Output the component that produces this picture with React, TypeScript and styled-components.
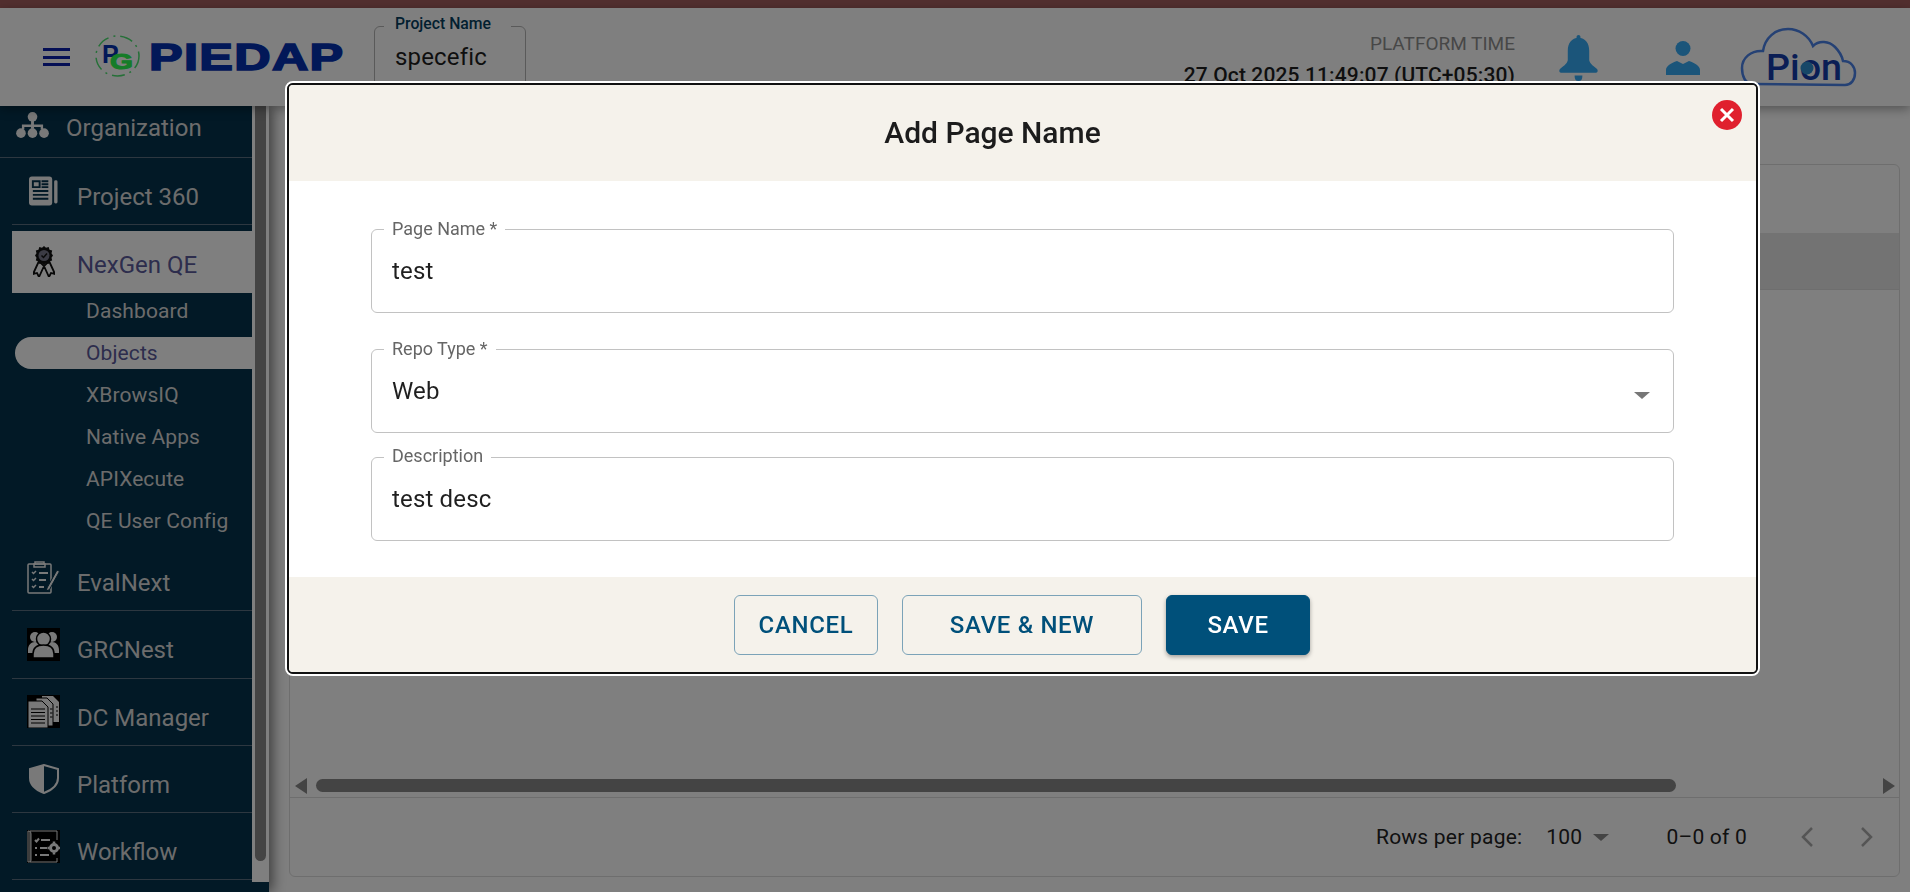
import React from "react";
import styled, { createGlobalStyle } from "styled-components";

const GlobalStyle = createGlobalStyle`
  html, body { margin: 0; padding: 0; height: 100%; background: #fff; overflow: hidden; }
  body { font-family: Roboto, "Liberation Sans", sans-serif; color: #1f1f1f; }
  * { box-sizing: border-box; }
`;

const Page = styled.div`
  width: 1910px;
  height: 892px;
  display: flex;
  flex-direction: column;
  overflow: hidden;
`;
const TopStrip = styled.div`
  height: 8px;
  background: #a45e5e;
  flex: none;
`;
const Header = styled.header`
  height: 98px;
  flex: none;
  display: flex;
  align-items: center;
  padding-left: 43px;
  background: #fff;
  box-shadow: 0 3px 10px rgba(0, 0, 0, 0.35);
  position: relative;
  z-index: 2;
`;
const Burger = styled.div`
  width: 27px;
  height: 18px;
  display: flex;
  flex-direction: column;
  justify-content: space-between;
  span {
    height: 3px;
    background: #0a1eaa;
  }
`;
const Logo = styled.div`
  display: flex;
  align-items: center;
  margin-left: 25px;
  width: 279px;
`;
const LogoWord = styled.span`
  font-family: "Liberation Sans", sans-serif;
  font-weight: 700;
  font-size: 37px;
  line-height: 1;
  letter-spacing: 1px;
  color: #0530b0;
  display: inline-block;
  -webkit-text-stroke: 1.6px #0530b0;
  transform: scaleX(1.36);
  transform-origin: left center;
  margin-left: 8px;
`;
const ProjectField = styled.fieldset`
  width: 152px;
  height: 80px;
  align-self: flex-start;
  margin: 7px 0 0;
  padding: 0 0 0 9px;
  border: 1px solid #b5b5b5;
  border-radius: 6px;
  legend {
    padding: 0 20px 6px 11px;
    font-size: 15.75px;
    line-height: 17px;
    font-weight: 500;
    color: #05405f;
  }
`;
const ProjectValue = styled.div`
  font-size: 24px;
  line-height: 28px;
  margin: 5px 0 0 11px;
  letter-spacing: 0.16px;
`;
const HeaderRight = styled.div`
  margin-left: auto;
  display: flex;
  align-items: flex-start;
  height: 100%;
  padding-right: 54px;
`;
const TimeBlock = styled.div`
  text-align: right;
  padding-top: 26px;
  width: 345px;
  flex: none;
`;
const TimeLabel = styled.div`
  font-size: 19px;
  line-height: 20px;
  color: #8f8f8f;
`;
const TimeValue = styled.div`
  font-size: 21px;
  line-height: 24px;
  margin-top: 9px;
  font-weight: 500;
  letter-spacing: 0.13px;
  white-space: nowrap;
  margin-left: -10px;
`;
const HeaderIcon = styled.div<{ $ml: number; $mt: number }>`
  margin-left: ${(p) => p.$ml}px;
  margin-top: ${(p) => p.$mt}px;
  line-height: 0;
`;

const Body = styled.div`
  flex: 1;
  display: flex;
  min-height: 0;
`;
const Sidebar = styled.aside`
  width: 269px;
  flex: none;
  display: flex;
  align-items: flex-start;
  background: #04324c;
  box-shadow: 4px 0 12px rgba(0, 0, 0, 0.5);
  position: relative;
  z-index: 1;
`;
const NavList = styled.nav`
  width: 252px;
  flex: none;
  margin-top: -13px;
  display: flex;
  flex-direction: column;
`;
const NavRow = styled.div<{ $inset?: boolean; $active?: boolean; $h?: number }>`
  height: ${(p) => p.$h ?? 67.3}px;
  flex: none;
  display: flex;
  align-items: center;
  margin-left: ${(p) => (p.$inset ? 12 : 0)}px;
  margin-top: ${(p) => (p.$active ? 5.7 : 0)}px;
  padding-left: ${(p) => (p.$inset ? 15 : 16)}px;
  font-size: 24px;
  color: ${(p) => (p.$active ? "#5a5a9a" : "#d8d8d8")};
  background: ${(p) => (p.$active ? "#fff" : "transparent")};
  border-bottom: ${(p) => (p.$active ? "none" : "1px solid #5a6f80")};
`;
const NavIconBox = styled.span<{ $dark?: boolean; $w: number }>`
  width: 33px;
  height: 33px;
  flex: none;
  display: flex;
  align-items: center;
  justify-content: center;
  margin-right: ${(p) => p.$w}px;
  background: ${(p) => (p.$dark ? "#000" : "transparent")};
`;
const NavLabel = styled.span<{ $drop: number }>`
  margin-top: ${(p) => p.$drop}px;
`;
const SubList = styled.div`
  margin-top: 2px;
  margin-bottom: 7px;
  display: flex;
  flex-direction: column;
  gap: 10px;
`;
const SubRow = styled.div<{ $active?: boolean }>`
  height: 32px;
  margin-left: 15px;
  padding-left: 71px;
  border-radius: 16px 0 0 16px;
  display: flex;
  align-items: center;
  font-size: 21px;
  letter-spacing: 0.1px;
  color: ${(p) => (p.$active ? "#5a5a9a" : "#d8d8d8")};
  background: ${(p) => (p.$active ? "#fff" : "transparent")};
`;
const Track = styled.div`
  width: 17px;
  height: 776px;
  flex: none;
  background: #fff;
  padding: 0 3px;
`;
const Thumb = styled.div`
  height: 755px;
  background: #888;
  border-radius: 0 0 6px 6px;
`;

const Main = styled.main`
  flex: 1;
  padding: 58px 10px 15px 20px;
  background: #fff;
  min-width: 0;
`;
const Panel = styled.section`
  height: 100%;
  border: 1px solid #ddd;
  border-radius: 6px;
  display: flex;
  flex-direction: column;
`;
const TableHead = styled.div`
  height: 57px;
  margin-top: 68px;
  background: #e7e7e7;
  border-bottom: 1px solid #ddd;
  flex: none;
`;
const TableEmpty = styled.div`
  flex: 1;
`;
const HScroll = styled.div`
  height: 24px;
  flex: none;
  display: flex;
  align-items: center;
  padding: 0 4px 0 5px;
  border-bottom: 1px solid #ddd;
`;
const HThumb = styled.div`
  width: 1360px;
  height: 13px;
  margin-left: 9px;
  background: #888;
  border-radius: 7px;
`;
const Arrow = styled.span<{ $right?: boolean }>`
  width: 0;
  height: 0;
  border-top: 8px solid transparent;
  border-bottom: 8px solid transparent;
  ${(p) => (p.$right ? "border-left: 12px solid #888; margin-left: auto;" : "border-right: 12px solid #888;")}
`;
const TableFooter = styled.div`
  height: 78px;
  flex: none;
  display: flex;
  align-items: center;
  font-size: 21px;
  letter-spacing: 0.22px;
  color: #222;
  padding-left: 1086px;
`;
const RowsValue = styled.span`
  margin-left: 24px;
  display: flex;
  align-items: center;
  gap: 11px;
`;
const Caret = styled.span<{ $c?: string }>`
  display: block;
  width: 0;
  height: 0;
  border-left: 8px solid transparent;
  border-right: 8px solid transparent;
  border-top: 7px solid ${(p) => p.$c ?? "#888"};
`;
const RangeText = styled.span`
  margin-left: 57px;
`;
const PagerIcon = styled.span<{ $ml: number }>`
  margin-left: ${(p) => p.$ml}px;
  line-height: 0;
`;

const Overlay = styled.div`
  position: fixed;
  inset: 0;
  z-index: 10;
  background: rgba(0, 0, 0, 0.5);
  padding: 81px 0 0 285px;
`;
const Modal = styled.div`
  width: 1475px;
  height: 595px;
  border: 2px solid #fff;
  border-radius: 8px;
  position: relative;
`;
const ModalInner = styled.div`
  height: 100%;
  border: 2px solid #111;
  border-radius: 6px;
  overflow: hidden;
  display: flex;
  flex-direction: column;
  background: #fff;
`;
const ModalHead = styled.div`
  height: 96px;
  flex: none;
  background: #f5f2eb;
  display: flex;
  align-items: center;
  justify-content: center;
  padding: 0 60px 2px 0;
  font-size: 30px;
  font-weight: 500;
  color: #1c1c1c;
`;
const CloseButton = styled.button`
  position: absolute;
  top: 17px;
  right: 16px;
  width: 30px;
  height: 30px;
  padding: 0;
  border: 0;
  border-radius: 50%;
  background: #e0202e;
  display: flex;
  align-items: center;
  justify-content: center;
`;
const ModalBody = styled.div`
  flex: 1;
  padding: 48px 82px 0 82px;
  display: flex;
  flex-direction: column;
`;
const Field = styled.fieldset<{ $mb: number }>`
  margin: -9.5px 0 ${(p) => p.$mb}px;
  padding: 0 0 0 12px;
  height: 93.5px;
  flex: none;
  border: 1px solid #c2c2c2;
  border-radius: 6px;
  position: relative;
  legend {
    padding: 0 8px 3px;
    font-size: 18px;
    line-height: 17px;
    height: 20px;
    color: #666;
  }
`;
const FieldValue = styled.div`
  font-size: 24px;
  line-height: 28px;
  margin-top: 17.5px;
  margin-left: 8px;
  letter-spacing: 0.16px;
`;
const SelectCaret = styled.span`
  position: absolute;
  right: 23px;
  top: 32.5px;
`;
const ModalFoot = styled.div`
  height: 95px;
  flex: none;
  background: #f5f2eb;
  display: flex;
  align-items: center;
  justify-content: center;
  gap: 24px;
  padding-right: 1px;
`;
const ActionButton = styled.button<{ $w: number; $primary?: boolean }>`
  width: ${(p) => p.$w}px;
  height: 60px;
  border-radius: 6px;
  font-family: Roboto, sans-serif;
  font-size: 24px;
  font-weight: 500;
  letter-spacing: 0.68px;
  border: 1px solid ${(p) => (p.$primary ? "#00507a" : "#7ba3b8")};
  background: ${(p) => (p.$primary ? "#00507a" : "transparent")};
  color: ${(p) => (p.$primary ? "#fff" : "#00507a")};
  box-shadow: ${(p) => (p.$primary ? "0 2px 4px rgba(0,0,0,.35)" : "none")};
`;

const c = "#f2f2f2";
const accent = "#36aaf5";

const OrgIcon = () => (
  <svg width="33" height="26" viewBox="0 0 34 27" fill={c}>
    <circle cx="17" cy="5" r="5" />
    <rect x="15.5" y="9" width="3" height="8" />
    <path d="M6 13h22v5h-2.500v-2.500h-7v2h-3v-2h-7V18H6z" />
    <circle cx="5" cy="22" r="5" />
    <circle cx="17" cy="22" r="5" />
    <circle cx="29" cy="22" r="5" />
  </svg>
);
const NewsIcon = () => (
  <svg width="29" height="30" viewBox="0 0 30 30">
    <rect x="0" y="0" width="24" height="30" rx="3" fill={c} />
    <rect x="26" y="4" width="3.500" height="24" rx="1.500" fill={c} />
    <path d="M4 5h7v6H4zM13 5h7M13 8h7M13 11h7M4 15h16M4 19h16M4 23h16" stroke="#04324c" strokeWidth="2" fill="none" />
  </svg>
);
const BadgeIcon = () => (
  <svg width="22" height="31" viewBox="0 0 22 31">
    <path d="M6 15 0 28l4-1 2 4 5-11zM16 15l6 13-4-1-2 4-5-11z" fill="none" stroke="#111" strokeWidth="1.800" />
    <path d="M11 0l2 1.800 2.700-.8.800 2.700 2.700.8-.7 2.700L20 9.500l-1.500 2.300.7 2.700-2.700.8-.8 2.700-2.700-.8L11 19l-2-1.800-2.700.8-.8-2.700-2.700-.8.700-2.700L2 9.500l1.500-2.300-.7-2.700 2.700-.8.800-2.700 2.700.8z" fill="#111" />
    <circle cx="11" cy="9.500" r="5.500" fill="#778" />
    <path d="M8.500 9.500l2 2 3.500-4" stroke="#111" strokeWidth="1.500" fill="none" />
  </svg>
);
const ClipboardIcon = () => (
  <svg width="33" height="33" viewBox="0 0 33 33" fill="none" stroke={c} strokeWidth="1.500">
    <rect x="1" y="3" width="23" height="29" rx="1" />
    <path d="M8 3V1h9v2M7 3h11v3H7z" />
    <path d="M5 11l1.500 1.500L9 10M5 18l1.500 1.500L9 17M5 25l1.500 1.500L9 24" />
    <path d="M12 12h9M12 19h7M12 26h5" strokeWidth="2" />
    <path d="M20 27l10-18 2.500 1.500-10 18-3 1.500z" fill={c} stroke="#04324c" strokeWidth="1" />
  </svg>
);
const GroupIcon = () => (
  <svg width="31" height="28" viewBox="0 0 31 28" fill={c}>
    <circle cx="7" cy="7" r="5" />
    <circle cx="24" cy="7" r="5" />
    <path d="M0 20c0-5 3-8 7-8s7 3 7 8v3H0zM17 20c0-5 3-8 7-8s7 3 7 8v3H17z" />
    <circle cx="15.500" cy="9" r="7" stroke="#000" strokeWidth="1.500" />
    <path d="M5 28v-4c0-6 4-9 10.500-9S26 18 26 24v4z" stroke="#000" strokeWidth="1.500" />
  </svg>
);
const DocsIcon = () => (
  <svg width="33" height="33" viewBox="0 0 33 33">
    <path d="M15 1h11l6 6v20H15z" fill={c} />
    <path d="M9 3h11l6 6v22H9z" fill={c} stroke="#000" />
    <path d="M1 6h14l6 6v21H1z" fill={c} stroke="#000" />
    <path d="M4 14h14M4 17.500h14M4 21h14M4 24.500h14M4 28h14" stroke="#000" />
    <path d="M23 14h2.500M23 18h2.500M23 22h2.500M29 12h2M29 16h2M29 20h2" stroke="#000" />
  </svg>
);
const ShieldIcon = () => (
  <svg width="30" height="30" viewBox="0 0 30 30">
    <path d="M15 1 1 5v9c0 7 6 12 14 15 8-3 14-8 14-15V5z" fill="none" stroke={c} strokeWidth="2" />
    <path d="M15 1 1 5v9c0 7 6 12 14 15z" fill={c} />
  </svg>
);
const FlowIcon = () => (
  <svg width="33" height="33" viewBox="0 0 33 33" fill="none" stroke={c} strokeWidth="1.500">
    <path d="M3 1v31M3 1h27v9M3 32h27v-4" strokeWidth="1" />
    <path d="M1 1c2 0 3 1 3 3v26c0 2-1 2-3 2z" strokeWidth="1" />
    <path d="M8 10l1.500 1.500L12 8.500M14 10h9M8 18h2M13 18h7M8 25h2M13 25h9" strokeWidth="2" />
    <circle cx="27" cy="18" r="3.500" strokeWidth="3" />
    <path d="M27 11.500v2M27 22.500v2M20.500 18h2M31 18h2" strokeWidth="2.500" />
  </svg>
);
const BellIcon = () => (
  <svg width="39" height="46" viewBox="0 0 40 50" preserveAspectRatio="none" fill={accent}>
    <rect x="18" y="0" width="4" height="6" rx="2" />
    <path d="M20 3c-7 0-11 6-11 14v10c0 3-3 6-8 10-1 1-1 4 1 4h36c2 0 2-3 1-4-5-4-8-7-8-10V17c0-8-4-14-11-14z" />
    <path d="M16 44h8c0 4-1 6-4 6s-4-2-4-6z" />
  </svg>
);
const UserIcon = () => (
  <svg width="34" height="34" viewBox="0 0 34 34" fill={accent}>
    <circle cx="17" cy="7.500" r="7.500" />
    <path d="M0 34v-5c0-4 5-7 11-9l6 3 6-3c6 2 11 5 11 9v5z" />
  </svg>
);
const PionLogo = () => (
  <svg width="115" height="57" viewBox="0 0 115 57" overflow="visible">
    <path
      d="M12 56C4 56 1 48 1 40 1 30 10 22 22 23 24 10 34 1 47 1c11 0 21 7 25 17 6-6 16-5 22 1 5 5 7 9 8 14 8 0 12 6 12 12 0 7-4 12-10 12z"
      fill="none"
      stroke="#4a82e8"
      strokeWidth="2.500"
    />
    <text
      x="25"
      y="52"
      fontFamily="Roboto, sans-serif"
      fontSize="37"
      fontWeight="500"
      fill="#143cab"
      textLength="76"
      lengthAdjust="spacingAndGlyphs"
    >
      Pion
    </text>
    <circle cx="66" cy="40" r="6.500" fill="#2f8fd0" />
  </svg>
);
const PgLogo = () => (
  <svg width="46" height="44" viewBox="0 0 46 44">
    <ellipse cx="22.500" cy="21" rx="21.500" ry="20" fill="none" stroke="#4ce070" strokeWidth="1.500" strokeDasharray="13 5 2 5" />
    <text x="7" y="28" fontFamily="Liberation Sans, sans-serif" fontWeight="700" fontSize="25" fill="#0530b0">
      P
    </text>
    <text
      x="15"
      y="34"
      fontFamily="Liberation Sans, sans-serif"
      fontWeight="700"
      fontSize="22"
      fill="#2cf850"
      stroke="#2cf850"
      textLength="23"
      lengthAdjust="spacingAndGlyphs"
    >
      G
    </text>
  </svg>
);
const Chevron = ({ left, color }: { left?: boolean; color: string }) => (
  <svg width="14" height="22" viewBox="0 0 14 22" fill="none" stroke={color} strokeWidth="2.500">
    <path d={left ? "M12 2 3 11l9 9" : "M2 2l9 9-9 9"} />
  </svg>
);

type NavItem = { label: string; icon: React.ReactNode; dark?: boolean };

const bottomNav: NavItem[] = [
  { label: "EvalNext", icon: <ClipboardIcon /> },
  { label: "GRCNest", icon: <GroupIcon />, dark: true },
  { label: "DC Manager", icon: <DocsIcon />, dark: true },
  { label: "Platform", icon: <ShieldIcon /> },
  { label: "Workflow", icon: <FlowIcon />, dark: true },
];
const subNav = ["Dashboard", "Objects", "XBrowsIQ", "Native Apps", "APIXecute", "QE User Config"];

const fields = [
  { label: "Page Name *", value: "test", gap: 36 },
  { label: "Repo Type *", value: "Web", select: true, gap: 23.5 },
  { label: "Description", value: "test desc", gap: 0 },
];

export default function App() {
  return (
    <>
      <GlobalStyle />
      <Page>
        <TopStrip />
        <Header>
          <Burger>
            <span />
            <span />
            <span />
          </Burger>
          <Logo>
            <PgLogo />
            <LogoWord>PIEDAP</LogoWord>
          </Logo>
          <ProjectField>
            <legend>Project Name</legend>
            <ProjectValue>specefic</ProjectValue>
          </ProjectField>
          <HeaderRight>
            <TimeBlock>
              <TimeLabel>PLATFORM TIME</TimeLabel>
              <TimeValue>27 Oct 2025 11:49:07 (UTC+05:30)</TimeValue>
            </TimeBlock>
            <HeaderIcon $ml={44} $mt={27}>
              <BellIcon />
            </HeaderIcon>
            <HeaderIcon $ml={68} $mt={33}>
              <UserIcon />
            </HeaderIcon>
            <HeaderIcon $ml={41} $mt={20}>
              <PionLogo />
            </HeaderIcon>
          </HeaderRight>
        </Header>
        <Body>
          <Sidebar>
            <NavList>
              <NavRow $h={65}>
                <NavIconBox $w={17}>
                  <OrgIcon />
                </NavIconBox>
                <NavLabel $drop={5}>Organization</NavLabel>
              </NavRow>
              <NavRow $inset>
                <NavIconBox $w={17}>
                  <NewsIcon />
                </NavIconBox>
                <NavLabel $drop={12}>Project 360</NavLabel>
              </NavRow>
              <NavRow $inset $active $h={62}>
                <NavIconBox $w={17}>
                  <BadgeIcon />
                </NavIconBox>
                <NavLabel $drop={6}>NexGen QE</NavLabel>
              </NavRow>
              <SubList>
                {subNav.map((s) => (
                  <SubRow key={s} $active={s === "Objects"}>
                    {s}
                  </SubRow>
                ))}
              </SubList>
              {bottomNav.map((item) => (
                <NavRow key={item.label} $inset>
                  <NavIconBox $dark={item.dark} $w={17}>
                    {item.icon}
                  </NavIconBox>
                  <NavLabel $drop={12}>{item.label}</NavLabel>
                </NavRow>
              ))}
            </NavList>
            <Track>
              <Thumb />
            </Track>
          </Sidebar>
          <Main>
            <Panel>
              <TableHead />
              <TableEmpty />
              <HScroll>
                <Arrow />
                <HThumb />
                <Arrow $right />
              </HScroll>
              <TableFooter>
                Rows per page:
                <RowsValue>
                  100 <Caret />
                </RowsValue>
                <RangeText>0–0 of 0</RangeText>
                <PagerIcon $ml={53}>
                  <Chevron left color="#aaa" />
                </PagerIcon>
                <PagerIcon $ml={46}>
                  <Chevron color="#aaa" />
                </PagerIcon>
              </TableFooter>
            </Panel>
          </Main>
        </Body>
        <Overlay>
          <Modal>
            <ModalInner>
              <ModalHead>Add Page Name</ModalHead>
              <ModalBody>
                {fields.map((f) => (
                  <Field key={f.label} $mb={f.gap}>
                    <legend>{f.label}</legend>
                    <FieldValue>{f.value}</FieldValue>
                    {f.select && (
                      <SelectCaret>
                        <Caret $c="#777" />
                      </SelectCaret>
                    )}
                  </Field>
                ))}
              </ModalBody>
              <ModalFoot>
                <ActionButton $w={144}>CANCEL</ActionButton>
                <ActionButton $w={240}>SAVE &amp; NEW</ActionButton>
                <ActionButton $w={144} $primary>
                  SAVE
                </ActionButton>
              </ModalFoot>
            </ModalInner>
            <CloseButton aria-label="Close">
              <svg width="16" height="16" viewBox="0 0 16 16" stroke="#fff" strokeWidth="3">
                <path d="M2 2l12 12M14 2 2 14" />
              </svg>
            </CloseButton>
          </Modal>
        </Overlay>
      </Page>
    </>
  );
}
